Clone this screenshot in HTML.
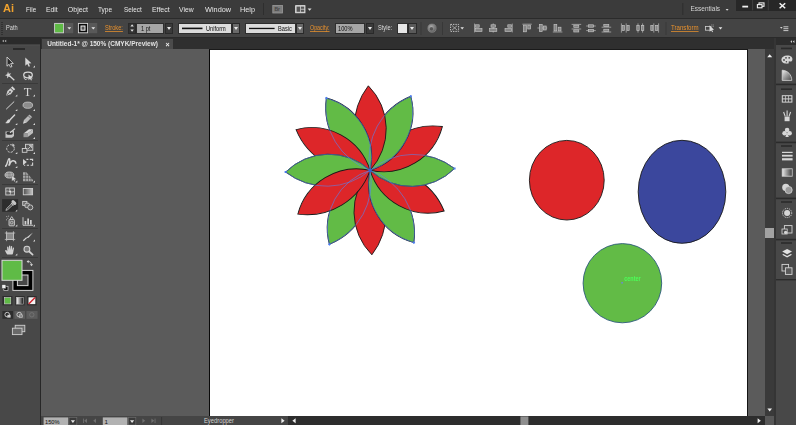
<!DOCTYPE html>
<html>
<head>
<meta charset="utf-8">
<title>Adobe Illustrator</title>
<style>
html,body{margin:0;padding:0;}
body{width:796px;height:425px;overflow:hidden;background:#5b5b5b;position:relative;font-family:"Liberation Sans",sans-serif;font-size:7px;color:#d8d8d8;}
.abs{position:absolute;}
#menubar,#ctrl,#tab{will-change:transform;}
#menubar{left:0;top:0;width:796px;height:18px;background:#3b3b3b;}
#menubar span.m{position:absolute;top:5.5px;font-size:7px;color:#e6e6e6;line-height:8px;white-space:nowrap;display:inline-block;transform-origin:0 50%;}
#ctrl{left:0;top:18px;width:796px;height:20px;background:#444444;border-top:1px solid #2b2b2b;border-bottom:1px solid #2a2a2a;box-sizing:border-box;}
#ctrl .t{position:absolute;top:5px;font-size:6.5px;line-height:8px;white-space:nowrap;color:#dadada;display:inline-block;transform-origin:0 50%;transform:scaleX(0.87);}
#ctrl .o{color:#e8912d;text-decoration:underline;text-decoration-thickness:0.5px;text-underline-offset:0.5px;text-decoration-color:rgba(232,145,45,0.75);}
.fld{position:absolute;top:4px;height:11px;background:#a6a6a6;border:1px solid #2e2e2e;box-sizing:border-box;color:#111;font-size:6.5px;line-height:9px;white-space:nowrap;}
.fld span{position:absolute;top:0;display:inline-block;transform-origin:0 50%;transform:scaleX(0.87);}
.dd{position:absolute;top:4px;height:11px;width:8px;background:#3a3a3a;border:1px solid #2a2a2a;box-sizing:border-box;}
.dd:after{content:"";position:absolute;left:1px;top:3px;border-left:2px solid transparent;border-right:2px solid transparent;border-top:3px solid #e8e8e8;}
.ddl{background:#6a6a6a;}
#tabbar{left:41px;top:38px;width:733px;height:11px;background:#2f2f2f;}
#tab{left:42px;top:39px;width:131px;height:10px;background:#4b4b4b;}
#tab span{position:absolute;left:5.2px;top:1.3px;font-size:6.5px;line-height:8px;color:#e2e2e2;font-weight:bold;white-space:nowrap;}
#tools{left:0;top:38px;width:40px;height:387px;background:#484848;}
#toolshead{left:0;top:38px;width:40px;height:6.5px;background:#2b2b2b;}
#toolsborder{left:40px;top:38px;width:1px;height:387px;background:#272727;}
#art{left:209px;top:49px;width:539px;height:367px;background:#fff;border-left:1px solid #0a0a0a;border-top:1px solid #1a1a1a;border-right:1px solid #141414;box-sizing:border-box;}
#vscroll{left:765px;top:49px;width:9px;height:367px;background:#3a3a3a;}
#vthumb{left:765px;top:228px;width:9px;height:9.5px;background:#a2a2a2;}
#rdborder{left:774px;top:38px;width:2px;height:387px;background:#353535;}
#rdock{left:776px;top:38px;width:20px;height:387px;background:#484848;}
#rdhead{left:776px;top:38px;width:20px;height:7px;background:#2d2d2d;}
#status{left:41px;top:416px;width:733px;height:9px;background:#323232;}
#corner{left:765px;top:416px;width:9px;height:9px;background:#585858;}
</style>
</head>
<body>
<div id="menubar" class="abs">
  <span class="m" style="left:3px;top:2.5px;font-size:11px;line-height:11px;font-weight:bold;color:#f0a22e;">Ai</span>
  <span class="m" style="left:25.6px;transform:scaleX(0.9);">File</span>
  <span class="m" style="left:46.2px;transform:scaleX(0.97);">Edit</span>
  <span class="m" style="left:67.8px;">Object</span>
  <span class="m" style="left:98.4px;transform:scaleX(0.93);">Type</span>
  <span class="m" style="left:123.6px;transform:scaleX(0.91);">Select</span>
  <span class="m" style="left:151.9px;">Effect</span>
  <span class="m" style="left:179.4px;transform:scaleX(0.97);">View</span>
  <span class="m" style="left:204.5px;transform:scaleX(1.05);">Window</span>
  <span class="m" style="left:240.3px;transform:scaleX(1.04);">Help</span>
  <span class="m" style="left:690.5px;top:5.3px;font-size:6.5px;color:#d4d4d4;">Essentials</span>
  <div class="abs" style="left:736px;top:0;width:60px;height:10.5px;background:#272727;"></div>
</div>
<div id="ctrl" class="abs">
  <span class="t" style="left:6px;">Path</span>
  <span class="t o" style="left:105.3px;">Stroke:</span>
  <div class="abs" style="left:128px;top:4px;width:8px;height:11px;background:#333;border:1px solid #2a2a2a;box-sizing:border-box;"></div>
  <div class="fld" style="left:136px;width:28px;"><span style="left:3.5px;">1 pt</span></div>
  <div class="dd" style="left:165px;"></div>
  <div class="fld" style="left:178px;width:54px;background:#dcdcdc;"><span style="left:26.5px;">Uniform</span></div>
  <div class="dd ddl" style="left:232px;"></div>
  <div class="fld" style="left:245px;width:51px;background:#dcdcdc;"><span style="left:31.7px;">Basic</span></div>
  <div class="dd ddl" style="left:296px;"></div>
  <span class="t o" style="left:309.8px;transform:scaleX(0.82);">Opacity:</span>
  <div class="fld" style="left:335px;width:30px;"><span style="left:1.8px;">100%</span></div>
  <div class="dd" style="left:365.5px;"></div>
  <span class="t" style="left:377.7px;">Style:</span>
  <div class="abs" style="left:397px;top:4px;width:10.8px;height:11px;background:#e6e6e6;border:1px solid #2e2e2e;box-sizing:border-box;"></div>
  <div class="dd ddl" style="left:407.5px;width:9px;background:#5a5a5a;"></div>
  <span class="t o" style="left:671px;transform:scaleX(0.94);">Transform</span>
</div>
<div id="tabbar" class="abs"></div>
<div id="tab" class="abs"><span>Untitled-1* @ 150% (CMYK/Preview)</span><span style="left:123.4px;top:1.9px;font-weight:bold;font-size:7px;color:#f0f0f0;">×</span></div>
<div id="tools" class="abs"></div>
<div id="toolshead" class="abs"></div>
<div id="toolsborder" class="abs"></div>
<div id="art" class="abs"></div>
<div id="vscroll" class="abs"></div>
<div id="vthumb" class="abs"></div>
<div id="rdborder" class="abs"></div>
<div id="rdock" class="abs"></div>
<div id="rdhead" class="abs"></div>
<div id="status" class="abs"></div>
<div id="corner" class="abs"></div>
<svg class="abs" id="ov" style="left:0;top:0;" width="796" height="425" viewBox="0 0 796 425">
<g transform="translate(370.1,170.3) rotate(118.8)"><path d="M0,0 A67.00,67.00 0 0 1 84.5,0 A61.00,61.00 0 0 1 0,0 Z" fill="#62bb46" stroke="#1a1a1a" stroke-width="0.9"/></g>
<g transform="translate(370.1,170.3) rotate(88.8)"><path d="M0,0 A67.00,67.00 0 0 1 84.5,0 A61.00,61.00 0 0 1 0,0 Z" fill="#dd2629" stroke="#1a1a1a" stroke-width="0.9"/></g>
<g transform="translate(370.1,170.3) rotate(58.8)"><path d="M0,0 A67.00,67.00 0 0 1 84.5,0 A61.00,61.00 0 0 1 0,0 Z" fill="#62bb46" stroke="#1a1a1a" stroke-width="0.9"/></g>
<g transform="translate(370.1,170.3) rotate(28.799999999999997)"><path d="M0,0 A67.00,67.00 0 0 1 84.5,0 A61.00,61.00 0 0 1 0,0 Z" fill="#dd2629" stroke="#1a1a1a" stroke-width="0.9"/></g>
<g transform="translate(370.1,170.3) rotate(-1.2000000000000028)"><path d="M0,0 A67.00,67.00 0 0 1 84.5,0 A61.00,61.00 0 0 1 0,0 Z" fill="#62bb46" stroke="#1a1a1a" stroke-width="0.9"/></g>
<g transform="translate(370.1,170.3) rotate(-31.200000000000003)"><path d="M0,0 A67.00,67.00 0 0 1 84.5,0 A61.00,61.00 0 0 1 0,0 Z" fill="#dd2629" stroke="#1a1a1a" stroke-width="0.9"/></g>
<g transform="translate(370.1,170.3) rotate(-61.2)"><path d="M0,0 A67.00,67.00 0 0 1 84.5,0 A61.00,61.00 0 0 1 0,0 Z" fill="#62bb46" stroke="#1a1a1a" stroke-width="0.9"/></g>
<g transform="translate(370.1,170.3) rotate(-91.2)"><path d="M0,0 A67.00,67.00 0 0 1 84.5,0 A61.00,61.00 0 0 1 0,0 Z" fill="#dd2629" stroke="#1a1a1a" stroke-width="0.9"/></g>
<g transform="translate(370.1,170.3) rotate(238.8)"><path d="M0,0 A67.00,67.00 0 0 1 84.5,0 A61.00,61.00 0 0 1 0,0 Z" fill="#62bb46" stroke="#1a1a1a" stroke-width="0.9"/></g>
<g transform="translate(370.1,170.3) rotate(208.8)"><path d="M0,0 A67.00,67.00 0 0 1 84.5,0 A61.00,61.00 0 0 1 0,0 Z" fill="#dd2629" stroke="#1a1a1a" stroke-width="0.9"/></g>
<g transform="translate(370.1,170.3) rotate(178.8)"><path d="M0,0 A67.00,67.00 0 0 1 84.5,0 A61.00,61.00 0 0 1 0,0 Z" fill="#62bb46" stroke="#1a1a1a" stroke-width="0.9"/></g>
<g transform="translate(370.1,170.3) rotate(148.8)"><path d="M0,0 A67.00,67.00 0 0 1 84.5,0 A61.00,61.00 0 0 1 0,0 Z" fill="#dd2629" stroke="#1a1a1a" stroke-width="0.9"/></g>
<g transform="translate(370.1,170.3) rotate(-61.2)"><path d="M0,0 A67.00,67.00 0 0 1 84.5,0 A61.00,61.00 0 0 1 0,0 Z" fill="none" stroke="#5585f2" stroke-width="0.55"/><rect x="83.5" y="-1" width="2" height="2" fill="#4a7cf0"/></g>
<g transform="translate(370.1,170.3) rotate(-1.2000000000000028)"><path d="M0,0 A67.00,67.00 0 0 1 84.5,0 A61.00,61.00 0 0 1 0,0 Z" fill="none" stroke="#5585f2" stroke-width="0.55"/><rect x="83.5" y="-1" width="2" height="2" fill="#4a7cf0"/></g>
<g transform="translate(370.1,170.3) rotate(58.8)"><path d="M0,0 A67.00,67.00 0 0 1 84.5,0 A61.00,61.00 0 0 1 0,0 Z" fill="none" stroke="#5585f2" stroke-width="0.55"/><rect x="83.5" y="-1" width="2" height="2" fill="#4a7cf0"/></g>
<g transform="translate(370.1,170.3) rotate(118.8)"><path d="M0,0 A67.00,67.00 0 0 1 84.5,0 A61.00,61.00 0 0 1 0,0 Z" fill="none" stroke="#5585f2" stroke-width="0.55"/><rect x="83.5" y="-1" width="2" height="2" fill="#4a7cf0"/></g>
<g transform="translate(370.1,170.3) rotate(178.8)"><path d="M0,0 A67.00,67.00 0 0 1 84.5,0 A61.00,61.00 0 0 1 0,0 Z" fill="none" stroke="#5585f2" stroke-width="0.55"/><rect x="83.5" y="-1" width="2" height="2" fill="#4a7cf0"/></g>
<g transform="translate(370.1,170.3) rotate(238.8)"><path d="M0,0 A67.00,67.00 0 0 1 84.5,0 A61.00,61.00 0 0 1 0,0 Z" fill="none" stroke="#5585f2" stroke-width="0.55"/><rect x="83.5" y="-1" width="2" height="2" fill="#4a7cf0"/></g>
<rect x="368.6" y="168.8" width="3" height="3" fill="#3a5fd0"/>
<ellipse cx="566.8" cy="180.2" rx="37.4" ry="39.8" fill="#dd2629" stroke="#1a1a1a" stroke-width="0.9"/>
<ellipse cx="682" cy="191.8" rx="43.8" ry="51.5" fill="#3b479d" stroke="#1a1a1a" stroke-width="0.9"/>
<ellipse cx="622.4" cy="283.2" rx="39.3" ry="39.6" fill="#62bb46" stroke="#2c5a7a" stroke-width="0.9"/>
<text x="624.3" y="281" font-family="Liberation Sans, sans-serif" font-size="6.3" font-weight="bold" textLength="16.4" lengthAdjust="spacingAndGlyphs" fill="#4cff58">center</text>
<rect x="621.3" y="282" width="1.6" height="1.6" fill="#6a8ad0"/>
<g id="toolicons" fill="none" stroke="none">
<!-- header arrows + gripper -->
<path d="M2.2,41 L3.8,39.8 L3.8,42.2 Z M4.6,41 L6.2,39.8 L6.2,42.2 Z" fill="#bdbdbd"/>
<rect id="toolhl" x="0" y="44.5" width="40" height="0.8" fill="#585858"/>
<rect x="13" y="48" width="12" height="2" fill="#2a2a2a"/>
<!-- separators -->
<g stroke="#3a3a3a" stroke-width="1"><path d="M2,83.5H38M2,140.5H38M2,184.5H38M2,228.5H38M2,257.5H38"/></g>
<!-- row1 -->
<path d="M7,57 L7,66.2 L9.1,64.3 L10.5,67.2 L12,66.5 L10.6,63.7 L13.3,63.5 Z" fill="#2a2a2a" stroke="#d6d6d6" stroke-width="0.9" stroke-linejoin="round"/>
<path d="M25.3,57.5 L25.3,65.8 L27.3,64 L28.7,66.8 L30,66.2 L28.7,63.5 L31.4,63.3 Z" fill="#d6d6d6"/>
<!-- row2 wand -->
<path d="M8,71.5 L8.8,73.8 L11.2,73.3 L9.6,75.2 L11,77.3 L8.7,76.5 L7.2,78.4 L7.2,76 L5,75.2 L7.2,74.3 Z" fill="#d6d6d6"/>
<path d="M9.5,75.8 L14.3,80.3" stroke="#d6d6d6" stroke-width="1.3"/>
<!-- lasso -->
<ellipse cx="28" cy="75" rx="4.3" ry="2.8" stroke="#d6d6d6" stroke-width="1.3"/>
<path d="M24.5,76.5 C23.5,78 24.5,80 26.5,79.5" stroke="#d6d6d6" stroke-width="1"/>
<path d="M28.5,74.5 L28.5,80.2 L30,78.8 L31,80.6 L32,80.1 L31.1,78.4 L33,78.2 Z" fill="#d6d6d6"/>
<!-- row3 pen -->
<path d="M12.3,86.3 L15.2,89.2 L13.8,90.6 L10.9,87.7 Z" fill="#d6d6d6"/>
<path d="M10.4,88.2 L13.3,91.1 L10.8,94.2 L6,95.8 L7.4,91 Z" fill="#cfcfcf"/>
<path d="M6.3,95.5 L9.6,92.2" stroke="#484848" stroke-width="0.8"/>
<circle cx="10" cy="91.8" r="0.9" fill="#484848"/>
<text x="23.8" y="95.6" font-family="Liberation Serif, serif" font-size="12.5" fill="#d6d6d6">T</text>
<!-- row4 -->
<path d="M6.2,109.2 L14.2,101.5" stroke="#d6d6d6" stroke-width="1"/>
<ellipse cx="27.8" cy="105.2" rx="4.8" ry="3.1" fill="#8c8c8c" stroke="#c8c8c8" stroke-width="0.8"/>
<!-- row5 brush -->
<path d="M14.6,115 L9.6,120.2" stroke="#d6d6d6" stroke-width="1.4" stroke-linecap="round"/>
<path d="M10.4,120.4 C10,123 7.5,123.8 5.2,123 C6.8,122.2 6.8,120.3 8.6,119.2 Z" fill="#d6d6d6"/>
<!-- pencil -->
<path d="M29.5,115 L31.6,117.1 L26,122.7 L23.9,120.6 Z" fill="#b8b8b8" stroke="#d6d6d6" stroke-width="0.6"/>
<path d="M23.9,120.6 L26,122.7 L23,123.8 Z" fill="#d6d6d6"/>
<path d="M28.5,116 L30.6,118.1" stroke="#484848" stroke-width="0.7"/>
<!-- row6 blob brush -->
<path d="M5.5,131.5 H12 L14,130 V136 L12,137.7 H5.5 Z" fill="#c4c4c4"/>
<ellipse cx="9.6" cy="133.2" rx="3.2" ry="1.6" fill="#333"/>
<path d="M10,132.8 L15,128.6" stroke="#d6d6d6" stroke-width="1.2"/>
<!-- eraser -->
<path d="M23.5,133.5 L29,129.3 H33 L27.5,133.5 Z" fill="#d6d6d6"/>
<path d="M23.5,133.5 H27.5 V137.2 H23.5 Z" fill="#9a9a9a"/>
<path d="M27.5,133.5 L33,129.3 V133 L27.5,137.2 Z" fill="#bdbdbd"/>
<!-- row7 rotate -->
<circle cx="10.5" cy="148.5" r="3.8" stroke="#d0d0d0" stroke-width="1" stroke-dasharray="2.2 1.2"/>
<path d="M12.5,143.5 L15,145.3 L12.2,146.5 Z" fill="#d0d0d0"/>
<!-- scale -->
<rect x="25.5" y="144.3" width="7.3" height="6" stroke="#d0d0d0" stroke-width="0.9" fill="#5a5a5a"/>
<rect x="22.3" y="148.5" width="4.6" height="3.8" stroke="#d0d0d0" stroke-width="0.9" fill="#484848"/>
<path d="M28,149 L31.3,145.7 M31.5,148 V145.5 H29" stroke="#d0d0d0" stroke-width="0.8"/>
<!-- row8 width tool -->
<path d="M5.8,166 C7.4,164.6 7.6,160.2 8.8,158.9 C10.2,157.9 9.9,161.4 9.3,164.8 M9.5,165 C10.2,162.6 11.8,160.7 13.4,160.8 C15,161 15.9,162.4 15.9,163.8" stroke="#d4d4d4" stroke-width="1.4" fill="none"/>
<rect x="5" y="165.4" width="1.4" height="1.4" fill="#e0e0e0"/><rect x="8.4" y="164.4" width="1.4" height="1.4" fill="#e0e0e0"/>
<!-- free transform -->
<path d="M23,158.9 L23,165.3 L26.8,162.1 Z" fill="#d4d4d4"/>
<path d="M26.4,159.4H28.4M29.8,159.4H32.6V161M32.6,162.4V165.3H30.6M29,165.3H26.8M25.2,165.3H24" stroke="#d4d4d4" stroke-width="1.1" fill="none"/>
<!-- row9 shape builder -->
<ellipse cx="9.4" cy="175" rx="4.4" ry="3" stroke="#c8c8c8" stroke-width="0.9" fill="#858585"/>
<path d="M5.2,175H13.6M7.6,172.4C6.6,174 6.8,176.4 8,177.8M10.6,172.2C11.8,174 11.6,176.4 10.6,177.8" stroke="#c8c8c8" stroke-width="0.6" fill="none"/>
<path d="M11.8,175.6 L11.8,181.2 L13.3,179.9 L14.3,181.8 L15.3,181.3 L14.4,179.5 L16.3,179.3 Z" fill="#dedede" stroke="#484848" stroke-width="0.3"/>
<!-- perspective grid -->
<path d="M23,172.3H26.4L33,180V181.2H23Z" fill="#a8a8a8"/>
<path d="M25.7,172.3V181.2M28.5,174.5V181.2M31,177.5V181.2M23,175.3H29M23,178.3H32" stroke="#484848" stroke-width="0.6" fill="none"/>
<!-- row10 mesh -->
<rect x="5.8" y="188" width="8.6" height="7" stroke="#d0d0d0" stroke-width="0.9" fill="#5c5c5c"/>
<path d="M5.8,191.5 C8,189.8 11,193.5 14.4,191.2 M10,188 C8.5,190.5 11.8,192.5 10,195" stroke="#d0d0d0" stroke-width="0.8"/>
<circle cx="10.1" cy="191.5" r="1" fill="#e0e0e0"/>
<!-- gradient -->
<defs><linearGradient id="gt" x1="0" x2="1" y1="0" y2="0"><stop offset="0" stop-color="#505050"/><stop offset="1" stop-color="#c4c4c4"/></linearGradient>
<linearGradient id="gt2" x1="0" x2="1" y1="0" y2="0"><stop offset="0" stop-color="#ffffff"/><stop offset="1" stop-color="#111"/></linearGradient></defs>
<rect x="23.3" y="188.5" width="9.3" height="6.3" fill="url(#gt)" stroke="#cfcfcf" stroke-width="0.9"/>
<!-- row11 eyedropper selected -->
<rect x="2.1" y="199.2" width="16" height="12.6" fill="#2d2d2d"/>
<path d="M13,201.6 L14.8,203.4" stroke="#c6c6c6" stroke-width="3" stroke-linecap="round"/>
<path d="M11.2,203 L13.6,205.4" stroke="#d0d0d0" stroke-width="1.2"/>
<path d="M11.4,203.8 L6.6,208.6 L5.9,210.4 L7.7,209.7 L12.9,204.9 Z" stroke="#c4c4c4" stroke-width="0.8" fill="#4a4a4a"/>
<!-- blend -->
<rect x="22.7" y="201.4" width="4.2" height="4" stroke="#d0d0d0" stroke-width="0.9" fill="#6a6a6a"/>
<rect x="25" y="203.2" width="4.4" height="4.4" rx="1.2" stroke="#d0d0d0" stroke-width="0.9" fill="#6a6a6a"/>
<circle cx="30.3" cy="207.4" r="2.5" stroke="#d0d0d0" stroke-width="0.9" fill="#5a5a5a"/>
<!-- row12 sprayer -->
<rect x="9" y="219.5" width="5.4" height="6.3" rx="0.8" stroke="#d0d0d0" stroke-width="0.9" fill="#6a6a6a"/>
<path d="M10,219.3 L11.7,216.6 L13.4,219.3" stroke="#d0d0d0" stroke-width="0.9"/>
<circle cx="11.7" cy="222.6" r="1.3" stroke="#d0d0d0" stroke-width="0.7"/>
<path d="M6.3,216.6 h0.9 M7.4,218.3 h0.9 M6,219.8 h0.9 M8.2,216.2 h0.9" stroke="#d0d0d0" stroke-width="0.8"/>
<!-- column graph -->
<path d="M23,217.2 V225.3 H33.2" stroke="#d0d0d0" stroke-width="0.9"/>
<rect x="24.6" y="221" width="1.7" height="3.6" fill="#d0d0d0"/><rect x="27.3" y="218.5" width="1.7" height="6.1" fill="#d0d0d0"/><rect x="30" y="220" width="1.7" height="4.6" fill="#d0d0d0"/>
<!-- row13 artboard -->
<rect x="6.6" y="233" width="6.8" height="6.4" fill="#8a8a8a" stroke="#d0d0d0" stroke-width="0.8"/>
<path d="M4.8,233H6.6M13.4,233H15.2M4.8,239.4H6.6M13.4,239.4H15.2M6.6,231.2V233M6.6,239.4V241.2M13.4,231.2V233M13.4,239.4V241.2" stroke="#d0d0d0" stroke-width="0.7"/>
<!-- slice -->
<path d="M33,232.6 L27.5,236.8 L26.2,238.3 L28.6,237.8 Z" fill="#d6d6d6"/>
<path d="M26.6,237.6 L23.3,240.7" stroke="#d6d6d6" stroke-width="1.3"/>
<!-- row14 hand -->
<path d="M7.2,254.6 C6,252.5 5,251.2 5.2,250.4 C5.7,249.7 6.6,250.3 7.3,251.3 L7.1,247.2 C7.2,246.3 8.3,246.3 8.4,247.2 L8.7,250 L9,246.2 C9.1,245.4 10.2,245.4 10.3,246.2 L10.4,250 L11,246.6 C11.2,245.8 12.2,246 12.2,246.8 L12,250.3 L12.9,247.9 C13.3,247.2 14.1,247.6 14,248.3 L13.2,252.4 C13,253.6 12.6,254.2 12.3,254.6 Z" fill="#d0d0d0"/>
<!-- zoom -->
<circle cx="26.9" cy="249.2" r="2.9" stroke="#d0d0d0" stroke-width="1.1" fill="#7a7a7a"/>
<path d="M29.2,251.5 L32.6,254.6" stroke="#d0d0d0" stroke-width="1.7" stroke-linecap="round"/>
<!-- fill / stroke -->
<rect x="12.9" y="270.4" width="20" height="20" fill="#000" stroke="#d2d2d2" stroke-width="1"/>
<rect x="17.4" y="275" width="10.6" height="10.6" fill="#484848" stroke="#d2d2d2" stroke-width="1"/>
<rect x="2" y="260.3" width="20" height="20" fill="#5fbb46" stroke="#d8d8d8" stroke-width="1"/>
<!-- swap -->
<path d="M27.8,261.5 C30,261.3 31.3,262.5 31.5,264.8" stroke="#d6d6d6" stroke-width="0.9"/>
<path d="M26.6,261.6 L28.6,260 L28.6,263.2 Z M31.5,266.3 L29.9,264.3 L33.1,264.3 Z" fill="#d6d6d6"/>
<!-- default -->
<rect x="3.8" y="286.3" width="4.2" height="4.2" fill="#111" stroke="#d6d6d6" stroke-width="0.7"/>
<rect x="1.9" y="284.6" width="4" height="4" fill="#f0f0f0" stroke="#333" stroke-width="0.5"/>
<!-- color/gradient/none -->
<rect x="2.4" y="296" width="10" height="9.4" fill="#2d2d2d"/>
<rect x="4.4" y="297.5" width="6.4" height="6.4" fill="#5fbb46" stroke="#d0d0d0" stroke-width="0.6"/>
<rect x="15.2" y="296" width="9.4" height="9.4" fill="#2d2d2d"/>
<rect x="16.6" y="297.3" width="6.8" height="6.8" fill="url(#gt2)" stroke="#d0d0d0" stroke-width="0.5"/>
<rect x="27.2" y="296" width="9.4" height="9.4" fill="#2d2d2d"/>
<rect x="28.5" y="297.3" width="6.8" height="6.8" fill="#f4f4f4"/>
<path d="M28.7,303.9 L35.1,297.5" stroke="#d0202a" stroke-width="1.4"/>
<!-- draw modes -->
<rect x="2.4" y="311" width="10.6" height="7.8" fill="#2d2d2d"/>
<rect x="14.4" y="311" width="10.6" height="7.8" fill="#5c5c5c"/>
<rect x="26.4" y="311" width="11.2" height="7.8" fill="#5c5c5c"/>
<circle cx="7.2" cy="314.6" r="2.3" stroke="#d0d0d0" stroke-width="0.9"/><rect x="7.4" y="314.8" width="3.2" height="2.8" fill="#d0d0d0"/>
<circle cx="19.2" cy="314.6" r="2.3" stroke="#d0d0d0" stroke-width="0.9"/><rect x="19.4" y="314.8" width="3.2" height="2.8" fill="#8a8a8a" stroke="#d0d0d0" stroke-width="0.5"/>
<circle cx="31.8" cy="314.8" r="2.2" stroke="#777" stroke-width="0.8"/>
<!-- screen mode -->
<rect x="15.2" y="325.3" width="9.6" height="6.4" fill="#6a6a6a" stroke="#d0d0d0" stroke-width="0.9"/>
<rect x="12.4" y="328.2" width="9.6" height="6.4" fill="#6a6a6a" stroke="#d0d0d0" stroke-width="0.9"/>
<!-- corner triangles -->
<g fill="#d8d8d8">
<path d="M35,65.6v2h-2z"/><path d="M17.3,94.5v2h-2z"/><path d="M35,94.5v2h-2z"/>
<path d="M17.3,109v2h-2z"/><path d="M35,109v2h-2z"/>
<path d="M17.3,123v2h-2z"/><path d="M35,123v2h-2z"/>
<path d="M35,137v2h-2z"/>
<path d="M17.3,152v2h-2z"/><path d="M35,152v2h-2z"/>
<path d="M17.3,166v2h-2z"/>
<path d="M17.3,180.5v2h-2z"/><path d="M35,180.5v2h-2z"/>
<path d="M17.3,209.5v2h-2z"/>
<path d="M17.3,224.5v2h-2z"/><path d="M35,224.5v2h-2z"/>
<path d="M35,239.5v2h-2z"/>
<path d="M17.3,253.5v2h-2z"/>
</g>
</g>

<g id="rdockicons">
<path d="M790.4,41.6 L792,40.2 L792,43 Z M792.8,41.6 L794.4,40.2 L794.4,43 Z" fill="#d0d0d0"/>
<!-- group separators & grippers -->
<g fill="#2b2b2b">
<rect x="776" y="83.6" width="20" height="1.6"/><rect x="776" y="141.6" width="20" height="1.6"/><rect x="776" y="197.6" width="20" height="1.6"/><rect x="776" y="238.8" width="20" height="1.6"/><rect x="776" y="279" width="20" height="1.4"/>
<rect x="781" y="47.6" width="11" height="1.6"/><rect x="781" y="88.4" width="11" height="1.6"/><rect x="781" y="145.2" width="11" height="1.6"/><rect x="781" y="201.2" width="11" height="1.6"/><rect x="781" y="242.2" width="11" height="1.6"/>
</g>
<!-- color palette -->
<path d="M787,55.6 C790.4,55.4 792.6,57.2 792.4,59.4 C792.2,61.6 790.6,61.6 789.6,61.4 C788.6,61.2 788.4,62.2 788.8,62.8 C789,63.6 787.4,63.8 785.8,63.6 C783,63.2 781.2,61.6 781.4,59.4 C781.6,57.2 784,55.8 787,55.6 Z" fill="#d6d6d6"/>
<circle cx="784" cy="60" r="0.9" fill="#484848"/><circle cx="786" cy="57.8" r="0.9" fill="#484848"/><circle cx="789.2" cy="57.8" r="0.9" fill="#484848"/><circle cx="786.4" cy="61.8" r="0.8" fill="#484848"/>
<!-- color guide -->
<defs><linearGradient id="cg" x1="0" x2="1" y1="0" y2="1"><stop offset="0" stop-color="#eeeeee"/><stop offset="1" stop-color="#444"/></linearGradient>
<linearGradient id="gr2" x1="0" x2="1" y1="0" y2="0"><stop offset="0" stop-color="#e8e8e8"/><stop offset="1" stop-color="#3a3a3a"/></linearGradient></defs>
<path d="M782.2,70.2 C787.6,70.4 791.6,74.6 791.8,80.4 L782.2,80.4 Z" fill="url(#cg)" stroke="#d6d6d6" stroke-width="0.8"/>
<!-- swatches -->
<rect x="781.8" y="95.2" width="10.6" height="7.4" fill="#d6d6d6"/>
<g fill="#484848"><rect x="782.8" y="96.2" width="2.4" height="2.2"/><rect x="785.9" y="96.2" width="2.4" height="2.2"/><rect x="789" y="96.2" width="2.4" height="2.2"/><rect x="782.8" y="99.4" width="2.4" height="2.2"/><rect x="785.9" y="99.4" width="2.4" height="2.2"/><rect x="789" y="99.4" width="2.4" height="2.2"/></g>
<!-- brushes -->
<rect x="784.6" y="116.6" width="5" height="4.6" fill="#d6d6d6"/>
<path d="M787.1,116.6V110.6M785.2,116.4L783.6,112M789,116.4L790.6,112" stroke="#d6d6d6" stroke-width="1.1"/>
<!-- symbols (club) -->
<circle cx="787.1" cy="130" r="2.3" fill="#d6d6d6"/><circle cx="784.6" cy="133.2" r="2.3" fill="#d6d6d6"/><circle cx="789.6" cy="133.2" r="2.3" fill="#d6d6d6"/>
<path d="M787.1,132 L785.4,137 H788.8 Z" fill="#d6d6d6"/>
<!-- stroke -->
<rect x="782" y="151.8" width="10.6" height="1.2" fill="#d6d6d6"/><rect x="782" y="154.8" width="10.6" height="1.8" fill="#d6d6d6"/><rect x="782" y="158.2" width="10.6" height="2.2" fill="#d6d6d6"/>
<!-- gradient -->
<rect x="782.2" y="168.8" width="10" height="7.4" fill="url(#gr2)" stroke="#d6d6d6" stroke-width="0.8"/>
<!-- transparency -->
<circle cx="785.8" cy="187.4" r="3.6" fill="#d6d6d6"/><circle cx="788.6" cy="190" r="3.6" fill="#9a9a9a" stroke="#d6d6d6" stroke-width="0.8"/>
<!-- appearance -->
<circle cx="787.1" cy="213" r="4.6" fill="none" stroke="#d6d6d6" stroke-width="0.9" stroke-dasharray="1.2 0.9"/><circle cx="787.1" cy="213" r="3" fill="#d6d6d6"/>
<!-- graphic styles -->
<rect x="784.4" y="225.6" width="7.6" height="7.4" fill="#484848" stroke="#d6d6d6" stroke-width="0.9"/>
<rect x="782" y="229" width="5.2" height="5" fill="#484848" stroke="#d6d6d6" stroke-width="0.8"/><circle cx="785.6" cy="232.4" r="1.6" fill="#d6d6d6"/>
<!-- layers -->
<path d="M787.1,249 L792,251.6 L787.1,254.2 L782.2,251.6 Z" fill="#e2e2e2"/>
<path d="M783.4,254 L787.1,256 L790.8,254 L792,254.8 L787.1,257.6 L782.2,254.8 Z" fill="#e2e2e2"/>
<!-- artboards -->
<rect x="782" y="264.4" width="6.6" height="6.6" fill="#484848" stroke="#d6d6d6" stroke-width="0.9"/>
<rect x="785.4" y="267.8" width="6.6" height="6.6" fill="#5a5a5a" stroke="#d6d6d6" stroke-width="0.9"/>
<!-- scrollbar arrows -->
<path d="M767.2,57.2h5l-2.5,-3z" fill="#f0f0f0"/>
<path d="M767.4,408.6h4.6l-2.3,3z" fill="#f0f0f0"/>
</g>

<g id="ctrlicons">
<path d="M2,22V35" stroke="#2a2a2a" stroke-width="1.4" stroke-dasharray="1 1"/>
<!-- fill swatch -->
<rect x="54.6" y="23.4" width="9" height="9.4" fill="#5fbb46" stroke="#d0d0d0" stroke-width="0.9"/>
<rect x="64.6" y="23" width="8.6" height="10.2" fill="#595959"/>
<path d="M67.4,27.2h3.8l-1.9,2.4z" fill="#e6e6e6"/>
<rect x="78.4" y="23.4" width="9.2" height="9.4" fill="#0a0a0a" stroke="#d8d8d8" stroke-width="0.9"/>
<rect x="81" y="26" width="4" height="4.2" fill="#555" stroke="#f0f0f0" stroke-width="1"/>
<rect x="88.4" y="23" width="8.8" height="10.2" fill="#595959"/>
<path d="M91.4,27.2h3.8l-1.9,2.4z" fill="#e6e6e6"/>
<!-- spinner -->
<path d="M130.4,26.4h3.4l-1.7,-2.2z M130.4,29.6h3.4l-1.7,2.2z" fill="#e0e0e0"/>
<!-- line samples -->
<rect x="182" y="27.6" width="20.5" height="1.6" fill="#111"/>
<rect x="249" y="27.8" width="25.6" height="1.3" fill="#111"/>
<!-- globe -->
<defs><radialGradient id="gl" cx="0.4" cy="0.35" r="0.7"><stop offset="0" stop-color="#b0b0b0"/><stop offset="1" stop-color="#5a5a5a"/></radialGradient></defs>
<circle cx="432" cy="28.2" r="4.1" fill="url(#gl)" stroke="#8a8a8a" stroke-width="0.7"/><circle cx="431.4" cy="28.8" r="1.7" fill="#3c3c3c" opacity="0.7"/>
<!-- separators -->
<g stroke="#383838" stroke-width="1"><path d="M421,22V35M442.5,22V35M666,22V35"/></g>
<!-- align to -->
<rect x="450.6" y="24.4" width="8" height="7" fill="none" stroke="#d0d0d0" stroke-width="0.9" stroke-dasharray="1.4 1"/>
<path d="M452,25.6L457.2,30.2M457.2,25.6L452,30.2" stroke="#b8b8b8" stroke-width="0.8"/>
<path d="M460.4,27.2h3.6l-1.8,2.2z" fill="#e0e0e0"/>
<g fill="#858585" stroke="#c6c6c6" stroke-width="0.65">
<!-- 1 align left -->
<path d="M474.5,23.6V32.4" /><rect x="475.6" y="24.8" width="3.6" height="2.4"/><rect x="475.6" y="28.6" width="6.4" height="2.8"/>
<!-- 2 -->
<path d="M493.2,23.4V32.6"/><rect x="491" y="24.8" width="4.4" height="2.4"/><rect x="489.6" y="28.6" width="7.2" height="2.8"/>
<!-- 3 -->
<path d="M512.3,23.6V32.4"/><rect x="507.8" y="24.8" width="3.6" height="2.4"/><rect x="505" y="28.6" width="6.4" height="2.8"/>
<!-- 4 align top -->
<path d="M522.4,24.2H531.8"/><rect x="523.6" y="25.2" width="2.8" height="6.6"/><rect x="527.8" y="25.2" width="2.8" height="3.8"/>
<!-- 5 -->
<path d="M537.4,28H547.2"/><rect x="539.4" y="24.4" width="2.8" height="7.2"/><rect x="543.4" y="26" width="2.8" height="4"/>
<!-- 6 -->
<path d="M552.8,32H562.4"/><rect x="554" y="24.4" width="2.8" height="6.6"/><rect x="558.2" y="27.2" width="2.8" height="3.8"/>
<!-- 7 -->
<path d="M571.6,24.4H581.2M571.6,29H581.2"/><rect x="573.8" y="25.2" width="5" height="2.2"/><rect x="573.8" y="29.8" width="5" height="2.2"/>
<!-- 8 -->
<path d="M586.2,26H595.8M586.2,30.6H595.8"/><rect x="588.6" y="24.8" width="5" height="2.4"/><rect x="588.6" y="29.4" width="5" height="2.4"/>
<!-- 9 -->
<path d="M601.6,27.2H611.2M601.6,32H611.2"/><rect x="603.8" y="24.4" width="5" height="2.2"/><rect x="603.8" y="29.2" width="5" height="2.2"/>
<!-- 10 -->
<path d="M621.4,23.4V32.6M626.2,23.4V32.6"/><rect x="622.2" y="25.4" width="2.2" height="5.2"/><rect x="627" y="25.4" width="2.2" height="5.2"/>
<!-- 11 -->
<path d="M638,23.4V32.6M642.6,23.4V32.6"/><rect x="636.8" y="25.4" width="2.4" height="5.2"/><rect x="641.4" y="25.4" width="2.4" height="5.2"/>
<!-- 12 -->
<path d="M653.8,23.4V32.6M658.6,23.4V32.6"/><rect x="650.8" y="25.4" width="2.2" height="5.2"/><rect x="655.6" y="25.4" width="2.2" height="5.2"/>
</g>
<!-- transform icon -->
<rect x="705.6" y="26.4" width="4.6" height="3.8" fill="none" stroke="#d0d0d0" stroke-width="0.8"/>
<path d="M709.6,25.2 L709.6,31.8 L711.2,30.4 L712.2,32.2 L713,31.8 L712.2,30 L714,29.8 Z" fill="#d8d8d8"/>
<path d="M711.4,25 h2.6 M711.4,26.6 h2.6" stroke="#d0d0d0" stroke-width="0.7" stroke-dasharray="0.8 0.6"/>
<path d="M718.6,27.2h3.8l-1.9,2.4z" fill="#e6e6e6"/>
<!-- panel menu -->
<path d="M780,27h2.6l-1.3,1.8z" fill="#d6d6d6"/>
<path d="M783.4,26.8H788.4M783.4,28.7H788.4M783.4,30.6H788.4" stroke="#d6d6d6" stroke-width="0.9"/>
</g>

<g id="menuicons">
<path d="M263.5,3V15" stroke="#2e2e2e" stroke-width="1"/>
<path d="M682.8,3V15" stroke="#2e2e2e" stroke-width="1"/>
<rect x="272.8" y="5.4" width="9.8" height="7.6" fill="#7c7c7c" stroke="#9a9a9a" stroke-width="0.8"/>
<text x="274.4" y="11.3" font-family="Liberation Sans, sans-serif" font-size="5" font-weight="bold" fill="#444">Br</text>
<rect x="295.6" y="5.6" width="9.4" height="7.2" fill="#cfcfcf" stroke="#e0e0e0" stroke-width="0.8"/>
<rect x="296.6" y="6.6" width="3.6" height="5.2" fill="#555"/><rect x="301" y="6.6" width="3.2" height="2.2" fill="#555"/><rect x="301" y="9.6" width="3.2" height="2.2" fill="#555"/>
<path d="M307.6,8.4h4l-2,2.4z" fill="#e0e0e0"/>
<path d="M725.6,9h3l-1.5,1.8z" fill="#d8d8d8"/>
<path d="M752.6,0V10.4M768.3,0V10.4" stroke="#404040" stroke-width="1"/>
<rect x="742.3" y="5.7" width="5.8" height="1.8" fill="#f0f0f0"/>
<rect x="759" y="2.9" width="5" height="3.4" fill="none" stroke="#f0f0f0" stroke-width="1.1"/>
<rect x="757.4" y="4.6" width="4.6" height="3.2" fill="#272727" stroke="#f0f0f0" stroke-width="1.1"/>
<path d="M779.6,3.2L785.2,8.2M785.2,3.2L779.6,8.2" stroke="#f4f4f4" stroke-width="1.5"/>
</g>

<g id="statusbar">
<rect x="41" y="416" width="247" height="9" fill="#454545"/>
<rect x="288" y="416" width="477" height="9" fill="#2d2d2d"/>
<rect x="43.6" y="417.4" width="24.6" height="7.6" fill="#b2b2b2"/>
<text x="45" y="424" font-family="Liberation Sans, sans-serif" font-size="6.2" fill="#111" textLength="14.5" lengthAdjust="spacingAndGlyphs">150%</text>
<rect x="69" y="417.4" width="7.8" height="7.6" fill="#3a3a3a" stroke="#6a6a6a" stroke-width="0.7"/>
<path d="M70.8,420.2h4.2l-2.1,2.8z" fill="#e8e8e8"/>
<g fill="#6e6e6e"><rect x="83" y="418.6" width="0.9" height="4.4"/><path d="M87,418.6v4.4l-2.8,-2.2z"/><path d="M96,418.6v4.4l-2.8,-2.2z"/>
<path d="M142.4,418.6v4.4l2.8,-2.2z"/><path d="M151.4,418.6v4.4l2.8,-2.2z"/><rect x="154.6" y="418.6" width="0.9" height="4.4"/></g>
<rect x="102.8" y="417.4" width="24.6" height="7.6" fill="#b2b2b2"/>
<text x="104.6" y="424" font-family="Liberation Sans, sans-serif" font-size="6.2" fill="#111">1</text>
<rect x="128.4" y="417.4" width="7.4" height="7.6" fill="#3a3a3a" stroke="#6a6a6a" stroke-width="0.7"/>
<path d="M130,420.2h4.2l-2.1,2.8z" fill="#e8e8e8"/>
<path d="M161.6,417V425" stroke="#353535" stroke-width="1"/>
<text x="204" y="423" font-family="Liberation Sans, sans-serif" font-size="6.3" fill="#d4d4d4" textLength="30" lengthAdjust="spacingAndGlyphs">Eyedropper</text>
<path d="M281.4,418.2v5l3.2,-2.5z" fill="#f0f0f0"/>
<path d="M295.6,418.2v5l-3.2,-2.5z" fill="#f0f0f0"/>
<rect x="520.4" y="416.4" width="8" height="8.6" fill="#8e8e8e"/>
<path d="M757.6,418.2v5l3.2,-2.5z" fill="#f0f0f0"/>
</g>

</svg>
</body>
</html>
